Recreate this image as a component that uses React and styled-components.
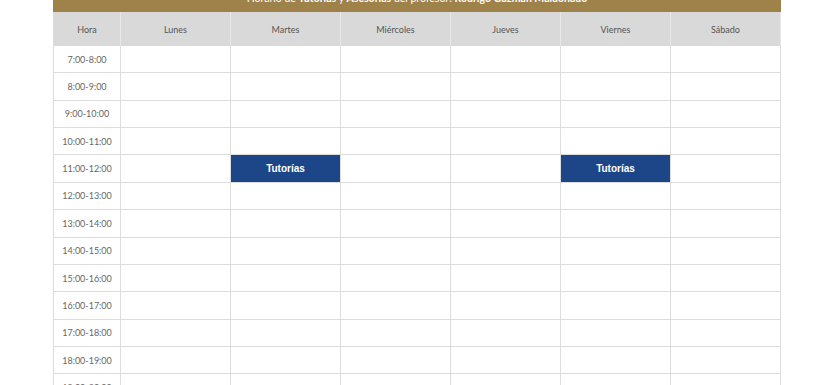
import React from "react";
import styled, { createGlobalStyle } from "styled-components";

const Global = createGlobalStyle`
  html, body { margin: 0; padding: 0; background: #fff; overflow: hidden; }
  body { font-family: Lato, "Open Sans", sans-serif; }
`;

const Page = styled.div`
  width: 728px;
  margin: -20px 0 0 53px;
`;

const Band = styled.div`
  background: #9f8249;
  color: #fff;
  text-align: center;
  font-size: 10.5px;
  line-height: 20px;
  padding: 8px 0 4px;
  b { font-weight: 700; }
`;

const Grid = styled.div`
  display: grid;
  grid-template-columns: 67px repeat(6, 110px);
  grid-template-rows: 34px;
  grid-auto-rows: 27.36px;
  border-left: 1px solid #dcdcdc;
  box-sizing: border-box;
`;

const HeadCell = styled.div`
  box-sizing: border-box;
  background: #d9d9d9;
  border-right: 1px solid #e8e8e8;
  display: flex;
  align-items: center;
  justify-content: center;
  font-size: 9px;
  color: #555;
`;

const Cell = styled.div`
  box-sizing: border-box;
  border-right: 1px solid #dcdcdc;
  border-bottom: 1px solid #dcdcdc;
  display: flex;
  align-items: center;
  justify-content: center;
  font-size: 9px;
  color: #666;
  background: ${(p) => (p.$busy ? "#1d4689" : "#fff")};
  ${(p) =>
    p.$busy &&
    `
    color: #fff;
    font-family: "Liberation Sans", Arial, sans-serif;
    font-weight: 700;
    font-size: 10px;
  `}
`;

const days = ["Lunes", "Martes", "Miércoles", "Jueves", "Viernes", "Sábado"];
const hours = [];
for (let h = 7; h < 21; h++) hours.push(`${h}:00-${h + 1}:00`);

const busy = { "11:00-12:00": [1, 4] };

export default function App() {
  return (
    <>
      <Global />
      <Page>
        <Band>
          Horario de <b>Tutorías</b> y <b>Asesorías</b> del profesor: <b>Rodrigo Guzmán Maldonado</b>
        </Band>
        <Grid>
          <HeadCell>Hora</HeadCell>
          {days.map((d) => (
            <HeadCell key={d}>{d}</HeadCell>
          ))}
          {hours.map((h) => (
            <React.Fragment key={h}>
              <Cell>{h}</Cell>
              {days.map((d, i) => {
                const isBusy = (busy[h] || []).includes(i);
                return (
                  <Cell key={d} $busy={isBusy}>
                    {isBusy ? "Tutorías" : ""}
                  </Cell>
                );
              })}
            </React.Fragment>
          ))}
        </Grid>
      </Page>
    </>
  );
}
